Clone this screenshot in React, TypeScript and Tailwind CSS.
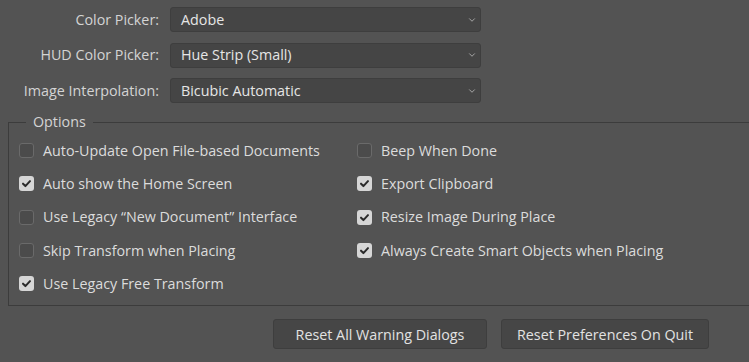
import { ChevronDown } from "lucide-react"

const selects = [
  { label: "Color Picker:", value: "Adobe" },
  { label: "HUD Color Picker:", value: "Hue Strip (Small)" },
  { label: "Image Interpolation:", value: "Bicubic Automatic" },
]

const leftOptions = [
  { label: "Auto-Update Open File-based Documents", checked: false },
  { label: "Auto show the Home Screen", checked: true },
  { label: "Use Legacy \u201cNew Document\u201d Interface", checked: false },
  { label: "Skip Transform when Placing", checked: false },
  { label: "Use Legacy Free Transform", checked: true },
]

const rightOptions = [
  { label: "Beep When Done", checked: false },
  { label: "Export Clipboard", checked: true },
  { label: "Resize Image During Place", checked: true },
  { label: "Always Create Smart Objects when Placing", checked: true },
]

function Checkbox({ checked }: { checked: boolean }) {
  if (checked) {
    return (
      <span className="flex h-[15px] w-[15px] shrink-0 items-center justify-center rounded-[3px] bg-[#d6d6d6]">
        <svg viewBox="0 0 12 12" className="h-[11px] w-[11px]">
          <path d="M2.2 6.2 L4.8 8.8 L9.8 3.4" fill="none" stroke="#2b2b2b" strokeWidth="2.2" strokeLinecap="round" strokeLinejoin="round" />
        </svg>
      </span>
    )
  }
  return <span className="h-[15px] w-[15px] shrink-0 rounded-[3px] border border-[#6a6a6a] bg-[#4b4b4b]" />
}

function Option({ label, checked }: { label: string; checked: boolean }) {
  return (
    <div className="flex h-[33.25px] items-center gap-[9px]">
      <Checkbox checked={checked} />
      <span className="whitespace-nowrap">{label}</span>
    </div>
  )
}

export default function App() {
  return (
    <div
      className="flex h-[362px] w-[749px] flex-col overflow-hidden bg-[#535353] text-[14.3px] text-[#dcdcdc]"
      style={{ fontFamily: '"Open Sans", "Noto Sans", sans-serif' }}
    >
      {/* Select rows */}
      <div className="flex flex-col gap-[10.5px] pt-[7px]">
        {selects.map((s) => (
          <div key={s.label} className="flex items-center">
            <label className="w-[160px] pr-[1px] text-right text-[#d4d4d4]">{s.label}</label>
            <div className="ml-[10px] flex h-[25px] w-[311px] items-center justify-between rounded-[3px] border border-[#3e3e3e] bg-[#454545] pl-[10px] pr-[3px] text-[#e6e6e6]">
              <span>{s.value}</span>
              <ChevronDown className="h-[10px] w-[10px] text-[#b8b8b8]" strokeWidth={2} />
            </div>
          </div>
        ))}
      </div>

      {/* Options group */}
      <fieldset className="ml-[8px] mr-[-4px] mt-[9px] border border-[#3c3c3c] pb-[5px] pl-[10px]">
        <legend className="ml-[7px] px-[7px] leading-[20px] text-[#d4d4d4]">Options</legend>
        <div className="mt-[2px] grid grid-cols-[338px_1fr]">
          <div className="flex flex-col">
            {leftOptions.map((o) => (
              <Option key={o.label} {...o} />
            ))}
          </div>
          <div className="flex flex-col">
            {rightOptions.map((o) => (
              <Option key={o.label} {...o} />
            ))}
          </div>
        </div>
      </fieldset>

      {/* Buttons */}
      <div className="mt-[13px] flex justify-end gap-[14px] pr-[40px]">
        <button className="h-[30px] w-[214px] rounded-[3px] border border-[#3e3e3e] bg-[#464646] text-[#e2e2e2]">
          Reset All Warning Dialogs
        </button>
        <button className="h-[30px] w-[208px] rounded-[3px] border border-[#3e3e3e] bg-[#464646] text-[#e2e2e2]">
          Reset Preferences On Quit
        </button>
      </div>
    </div>
  )
}
